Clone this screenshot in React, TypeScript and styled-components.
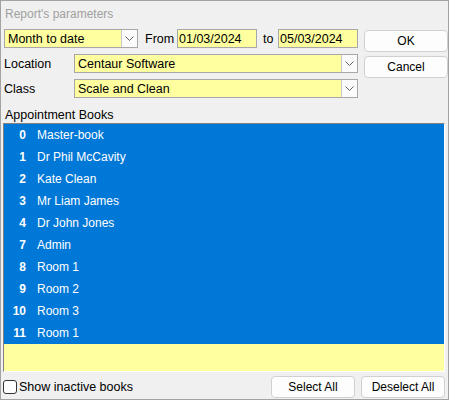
import React from 'react';
import styled, { createGlobalStyle } from 'styled-components';

const GlobalStyle = createGlobalStyle`
  html, body {
    margin: 0;
    padding: 0;
    background: #f0f0f0;
  }
  * {
    box-sizing: border-box;
  }
`;

const YELLOW = '#ffffa0';
const BLUE = '#0078d7';

interface Book {
  id: number;
  name: string;
}

const BOOKS: Book[] = [
  { id: 0, name: 'Master-book' },
  { id: 1, name: 'Dr Phil McCavity' },
  { id: 2, name: 'Kate Clean' },
  { id: 3, name: 'Mr Liam James' },
  { id: 4, name: 'Dr John Jones' },
  { id: 7, name: 'Admin' },
  { id: 8, name: 'Room 1' },
  { id: 9, name: 'Room 2' },
  { id: 10, name: 'Room 3' },
  { id: 11, name: 'Room 1' },
];

const Window = styled.div`
  width: 449px;
  height: 400px;
  border: 1px solid #a3a3a3;
  background: #f0f0f0;
  padding: 0 3px 0 3px;
  display: flex;
  flex-direction: column;
  font-family: 'Liberation Sans', Arial, sans-serif;
  font-size: 12px;
  color: #000;
`;

const Title = styled.div`
  height: 27px;
  padding-left: 1px;
  padding-bottom: 2px;
  display: flex;
  align-items: center;
  color: #a0a0a0;
  font-size: 12px;
`;

const Top = styled.div`
  display: flex;
  gap: 6px;
`;

const Fields = styled.div`
  width: 354px;
  display: flex;
  flex-direction: column;
  gap: 6px;
  padding-top: 1px;
`;

const FieldRow = styled.div`
  height: 19px;
  display: flex;
  align-items: center;
`;

const Label = styled.span<{ $width?: number; $pad?: number }>`
  width: ${({ $width }) => ($width ? `${$width}px` : 'auto')};
  padding-left: ${({ $pad }) => $pad ?? 0}px;
  flex: none;
  font-size: 12.5px;
  white-space: nowrap;
`;

const Combo = styled.div<{ $width: number }>`
  width: ${({ $width }) => $width}px;
  height: 19px;
  flex: none;
  display: flex;
  align-items: center;
  background: ${YELLOW};
  border: 1px solid #a8a8a8;
  padding-left: 3px;
  font-size: 12.5px;
`;

const ComboText = styled.span`
  flex: 1;
`;

const DropButton = styled.span`
  width: 16px;
  height: 17px;
  flex: none;
  display: flex;
  align-items: center;
  justify-content: center;
  background: #fbfbfb;
  border-left: 1px solid #c8c8c8;
`;

const DateBox = styled.div`
  width: 80px;
  height: 19px;
  flex: none;
  display: flex;
  align-items: center;
  background: ${YELLOW};
  border: 1px solid #a8a8a8;
  padding-left: 1px;
  font-size: 12.5px;
`;

const Buttons = styled.div`
  display: flex;
  flex-direction: column;
  gap: 4px;
  padding-top: 2px;
`;

const Button = styled.button`
  width: 84px;
  height: 22px;
  background: #fdfdfd;
  border: 1px solid #d0d0d0;
  border-radius: 4px;
  font-family: 'Liberation Sans', Arial, sans-serif;
  font-size: 12px;
  color: #000;
  padding: 0;
`;

const SectionLabel = styled.div`
  margin-top: 9px;
  height: 16px;
  display: flex;
  align-items: center;
  padding-left: 1px;
  font-size: 12.5px;
`;

const ListBox = styled.div`
  width: 442px;
  height: 249px;
  margin-left: -1px;
  border-top: 1px solid #828282;
  border-left: 1px solid #828282;
  border-right: 1px solid #ffffff;
  border-bottom: 1px solid #ffffff;
  background: ${YELLOW};
  display: flex;
  flex-direction: column;
`;

const BookRow = styled.div`
  height: 22px;
  flex: none;
  display: flex;
  align-items: center;
  background: ${BLUE};
  color: #fff;
`;

const BookId = styled.span`
  width: 22px;
  text-align: right;
  font-weight: bold;
  flex: none;
`;

const BookName = styled.span`
  padding-left: 11px;
`;

const Bottom = styled.div`
  margin-top: 3px;
  display: flex;
  align-items: center;
`;

const CheckLabel = styled.label`
  flex: 1;
  display: flex;
  align-items: center;
  gap: 2px;
  margin-left: -1px;
  font-size: 12.5px;
`;

const CheckBox = styled.span`
  width: 14px;
  height: 14px;
  border: 1px solid #333;
  border-radius: 3px;
  background: #fff;
`;

const BottomButtons = styled.div`
  display: flex;
  gap: 6px;
  padding-top: 1px;
`;

const Chevron = () => (
  <svg width="9" height="6" viewBox="0 0 9 6" aria-hidden>
    <polyline points="0.5,0.5 4.5,4.5 8.5,0.5" fill="none" stroke="#606060" strokeWidth="1" />
  </svg>
);

export default function App() {
  return (
    <>
      <GlobalStyle />
      <Window>
        <Title>Report's parameters</Title>
        <Top>
          <Fields>
            <FieldRow>
              <Combo $width={134}>
                <ComboText>Month to date</ComboText>
                <DropButton>
                  <Chevron />
                </DropButton>
              </Combo>
              <Label $width={39} $pad={7}>From</Label>
              <DateBox>01/03/2024</DateBox>
              <Label $width={21} $pad={6}>to</Label>
              <DateBox>05/03/2024</DateBox>
            </FieldRow>
            <FieldRow>
              <Label $width={70}>Location</Label>
              <Combo $width={284}>
                <ComboText>Centaur Software</ComboText>
                <DropButton>
                  <Chevron />
                </DropButton>
              </Combo>
            </FieldRow>
            <FieldRow>
              <Label $width={70}>Class</Label>
              <Combo $width={284}>
                <ComboText>Scale and Clean</ComboText>
                <DropButton>
                  <Chevron />
                </DropButton>
              </Combo>
            </FieldRow>
          </Fields>
          <Buttons>
            <Button>OK</Button>
            <Button>Cancel</Button>
          </Buttons>
        </Top>
        <SectionLabel>Appointment Books</SectionLabel>
        <ListBox>
          {BOOKS.map((b) => (
            <BookRow key={b.id}>
              <BookId>{b.id}</BookId>
              <BookName>{b.name}</BookName>
            </BookRow>
          ))}
        </ListBox>
        <Bottom>
          <CheckLabel>
            <CheckBox />
            Show inactive books
          </CheckLabel>
          <BottomButtons>
            <Button>Select All</Button>
            <Button>Deselect All</Button>
          </BottomButtons>
        </Bottom>
      </Window>
    </>
  );
}
